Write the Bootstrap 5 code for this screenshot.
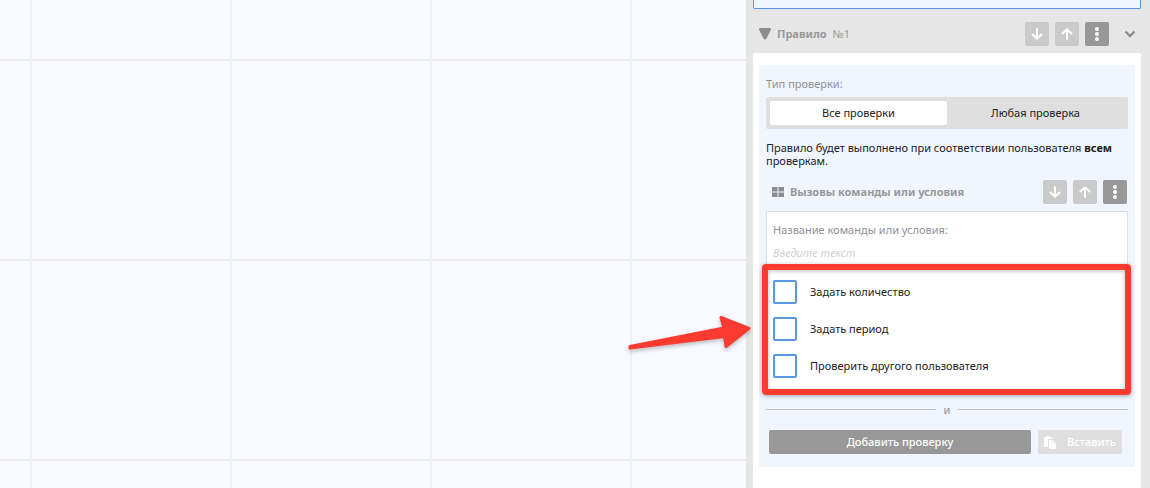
<!DOCTYPE html>
<html lang="ru">
<head>
<meta charset="utf-8">
<meta name="viewport" content="width=device-width, initial-scale=1">
<title>Правило №1</title>
<link href="https://cdn.jsdelivr.net/npm/bootstrap@5.3.0/dist/css/bootstrap.min.css" rel="stylesheet">
<style>
body{font-family:"Noto Sans","Open Sans",sans-serif;font-size:11px;line-height:13px;color:#222;background:#f9faff}
.workspace{min-height:100vh}
.board{background:
  linear-gradient(90deg,#f0f1f5 2px,transparent 2px) 30px 0/200px 200px,
  linear-gradient(#ececf0 2px,transparent 2px) 0 59px/200px 200px,#f9faff}
.sidebar{width:404px;padding:0 9px 0 7px;background:#e6e6e6}
.prev-block{height:9px;background:#f1f5fe;border:1px solid #5b96e0;border-top:0;border-radius:0 0 2px 2px}
.rule-head{height:44px;padding:6px 5px 0 6px;color:#999}
.rule-head strong,.rule-head span,.check-head strong{margin-left:6px;padding-bottom:2px}
.tools{gap:6px}
.rule-head .tools{margin-right:15px}
.sq{width:24px;height:24px;border:0;border-radius:2px;padding:0;background:#cacaca;color:#fff;display:flex;align-items:center;justify-content:center}
.sq-dark{background:#989898}
.bare{border:0;background:none;padding:0;color:#8c8c8c;display:flex}
.rule-body{background:#fff;border-radius:2px 2px 0 0;padding:12px 6px 20px}
.checks{background:#f0f5fe;padding:12px 7px 13px}
.muted{color:#8f929a}
.switch-bar{background:#dfdfdf;padding:4px;height:32px;margin-top:7px;border-radius:2px}
.switch-bar label{flex:0 0 50%;display:flex;align-items:center;justify-content:center;border-radius:2px;padding-bottom:2px;cursor:pointer}
.switch-bar .btn-check:checked + label{background:#fff}
.hint{margin:12px 0 0}
.check-head{margin-top:13px;padding:0 1px 0 6px;color:#999}
.check-card{background:#fff;border:1px solid #dcdfe5;margin-top:7px;padding:11px 6px 12px}
.name-input{border:0;padding:0;margin-top:6px;height:20px;width:100%;font-style:italic;outline:0;background:none}
.name-input::placeholder{color:#cfcfcf;opacity:1}
.options{padding-top:18px;gap:13px}
.options .form-check-input{width:24px;height:24px;margin:0;float:none;border:2px solid #5b96e0;border-radius:2px;background-color:#fff}
.options .form-check{margin:0;padding:0;min-height:24px;gap:13px}
.options label{padding-bottom:2px}
.callout-frame{position:absolute;inset:2px -10px -17px -11px;border:6px solid #fb3b2f;border-radius:4px;pointer-events:none;box-shadow:0 1px 4px #0005,inset 0 1px 4px #0004}
.callout-arrow{position:absolute;right:calc(100% + 22px);top:48px;pointer-events:none;filter:drop-shadow(0 2px 2px #0004)}
.and-line{margin-top:12px;color:#8f929a}
.and-line i{height:1px;background:#bfc4d0}
.actions{margin-top:14px;padding:0 6px 0 3px;gap:7px}
.act{height:24px;border:0;border-radius:2px;color:#fff;padding:0 0 2px;font-weight:500}
.act-add{background:#989898}
.act-paste{width:84px;background:#dfdfdf;padding:0 6px}
.act-paste span{padding-bottom:2px}
</style>
</head>
<body>
<div class="workspace d-flex">
  <main class="board flex-grow-1"></main>
  <aside class="sidebar flex-shrink-0 d-flex flex-column">
    <div class="prev-block"></div>
    <header class="rule-head d-flex align-items-center">
      <svg width="12" height="12" viewBox="0 0 12 12" fill="#8c8c8c"><path d="M1.200 0h9.600a1.200 1.200 0 0 1 1 1.900L7.500 10.500a1.700 1.700 0 0 1-3 0L.2 1.900A1.200 1.200 0 0 1 1.200 0z"/></svg>
      <strong>Правило</strong><span>№1</span>
      <div class="tools d-flex ms-auto align-items-center">
        <button class="sq" type="button" aria-label="Вниз"><svg width="12" height="12" viewBox="0 0 12 12" fill="none" stroke="currentColor" stroke-width="2" stroke-linecap="round" stroke-linejoin="round"><path d="M6 1v9.500M1.500 6.500L6 10.800l4.500-4.300"/></svg></button>
        <button class="sq" type="button" aria-label="Вверх"><svg width="12" height="12" viewBox="0 0 12 12" fill="none" stroke="currentColor" stroke-width="2" stroke-linecap="round" stroke-linejoin="round"><path d="M6 11V1.500M1.500 5.500L6 1.200l4.500 4.300"/></svg></button>
        <button class="sq sq-dark" type="button" aria-label="Меню"><svg width="4" height="14" viewBox="0 0 4 14" fill="currentColor"><circle cx="2" cy="2" r="2"/><circle cx="2" cy="7" r="2"/><circle cx="2" cy="12" r="2"/></svg></button>
      </div>
      <button class="bare" type="button" aria-label="Свернуть"><svg width="12" height="8" viewBox="0 0 12 8" fill="none" stroke="currentColor" stroke-width="2.300"><path d="M1.500 1.500L6 6l4.500-4.500"/></svg></button>
    </header>
    <section class="rule-body flex-grow-1">
      <div class="checks">
        <div class="muted">Тип проверки:</div>
        <div class="switch-bar d-flex" role="radiogroup" aria-label="Тип проверки">
          <input class="btn-check" type="radio" name="kind" id="all" checked><label for="all">Все проверки</label>
          <input class="btn-check" type="radio" name="kind" id="any"><label for="any">Любая проверка</label>
        </div>
        <p class="hint">Правило будет выполнено при соответствии пользователя <strong>всем</strong> проверкам.</p>
        <div class="check-head d-flex align-items-center">
          <svg width="12" height="10" viewBox="0 0 12 10" fill="#8c8c8c"><path d="M0 0h5.500v4.500H0zM6.500 0H12v4.500H6.500zM0 5.500h5.500V10H0zM6.500 5.500H12V10H6.500z"/></svg>
          <strong>Вызовы команды или условия</strong>
          <div class="tools d-flex ms-auto">
            <button class="sq" type="button" aria-label="Вниз"><svg width="12" height="12" viewBox="0 0 12 12" fill="none" stroke="currentColor" stroke-width="2" stroke-linecap="round" stroke-linejoin="round"><path d="M6 1v9.500M1.500 6.500L6 10.800l4.500-4.300"/></svg></button>
            <button class="sq" type="button" aria-label="Вверх"><svg width="12" height="12" viewBox="0 0 12 12" fill="none" stroke="currentColor" stroke-width="2" stroke-linecap="round" stroke-linejoin="round"><path d="M6 11V1.500M1.500 5.500L6 1.200l4.500 4.300"/></svg></button>
            <button class="sq sq-dark" type="button" aria-label="Меню"><svg width="4" height="14" viewBox="0 0 4 14" fill="currentColor"><circle cx="2" cy="2" r="2"/><circle cx="2" cy="7" r="2"/><circle cx="2" cy="12" r="2"/></svg></button>
          </div>
        </div>
        <div class="check-card">
          <label class="muted d-block" for="cmd">Название команды или условия:</label>
          <input class="name-input d-block" id="cmd" type="text" placeholder="Введите текст">
          <div class="options d-flex flex-column position-relative">
            <div class="form-check d-flex align-items-center"><input class="form-check-input" type="checkbox" id="o1"><label for="o1">Задать количество</label></div>
            <div class="form-check d-flex align-items-center"><input class="form-check-input" type="checkbox" id="o2"><label for="o2">Задать период</label></div>
            <div class="form-check d-flex align-items-center"><input class="form-check-input" type="checkbox" id="o3"><label for="o3">Проверить другого пользователя</label></div>
            <div class="callout-frame"></div>
            <svg class="callout-arrow" width="126" height="40" viewBox="0 0 126 40"><path d="M5 36.500L99 18 96 7.500 124 18.300 101 36.500 99.500 26.500 5 38z" fill="#fb3b2f" stroke="#fb3b2f" stroke-width="3" stroke-linejoin="round"/></svg>
          </div>
        </div>
        <div class="and-line d-flex align-items-center gap-2"><i class="flex-grow-1"></i><span>и</span><i class="flex-grow-1"></i></div>
        <div class="actions d-flex">
          <button class="act act-add flex-grow-1" type="button">Добавить проверку</button>
          <button class="act act-paste d-flex align-items-center justify-content-between" type="button" disabled>
            <svg width="12" height="13" viewBox="0 0 12 13" fill="#fff"><path d="M0 2q0-1 1-1h1.500a1.500 1.500 0 0 1 3 0H7q1 0 1 1v1H5q-1 0-1 1v7H1q-1 0-1-1z"/><path d="M5 4h3.500v3.500H12V13H5zM9.300 4L12 6.700H9.300z"/></svg>
            <span>Вставить</span>
          </button>
        </div>
      </div>
    </section>
  </aside>
</div>
<script src="https://cdn.jsdelivr.net/npm/bootstrap@5.3.0/dist/js/bootstrap.bundle.min.js"></script>
</body>
</html>
